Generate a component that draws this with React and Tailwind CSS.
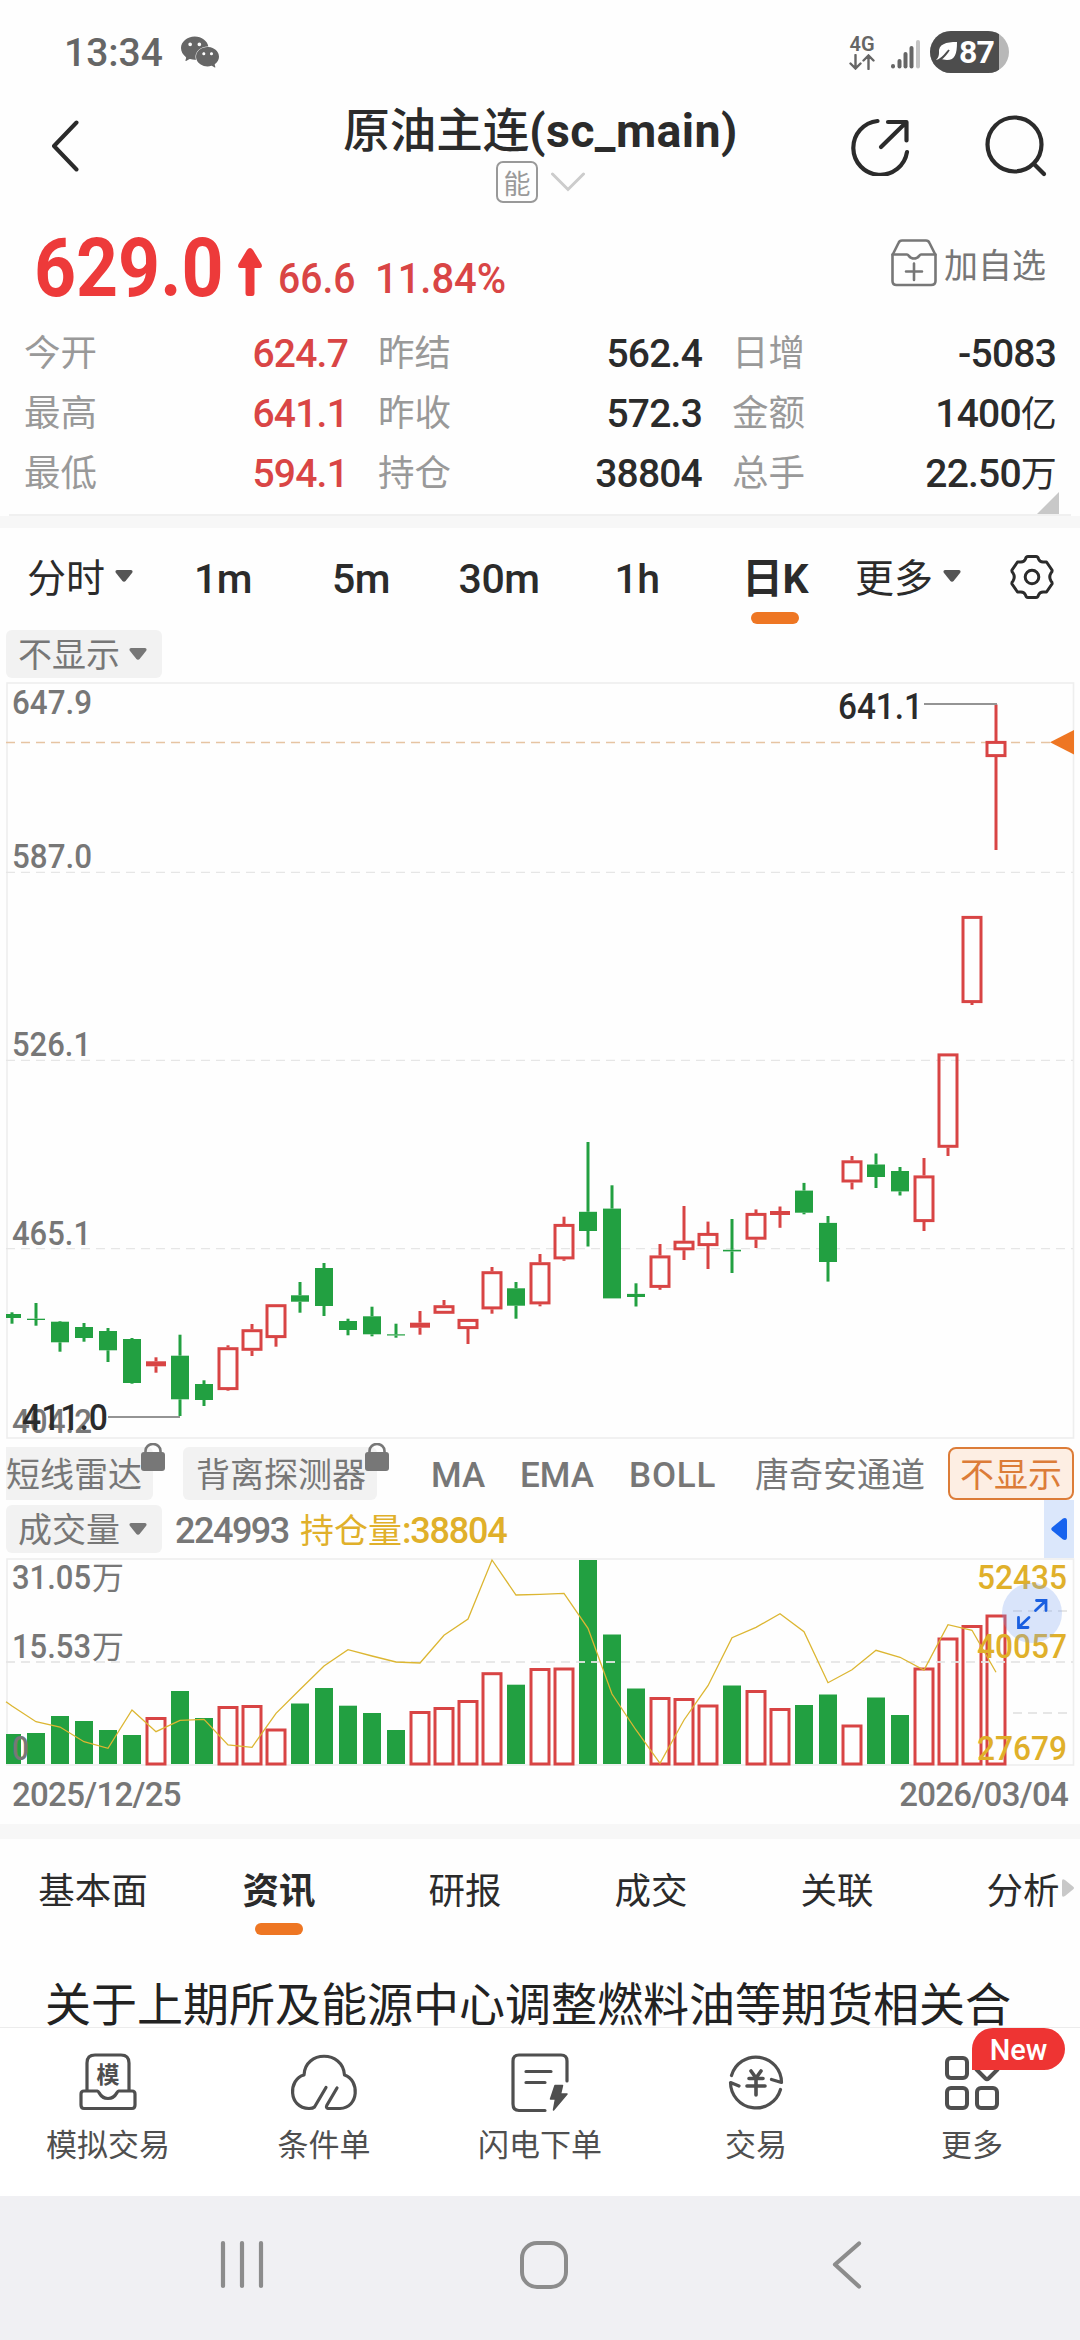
import { SiWechat } from "react-icons/si";

const quotes = [
  [
    { label: "今开", value: "624.7", up: true },
    { label: "昨结", value: "562.4" },
    { label: "日增", value: "-5083" },
  ],
  [
    { label: "最高", value: "641.1", up: true },
    { label: "昨收", value: "572.3" },
    { label: "金额", value: "1400亿" },
  ],
  [
    { label: "最低", value: "594.1", up: true },
    { label: "持仓", value: "38804" },
    { label: "总手", value: "22.50万" },
  ],
];

const periods = ["1m", "5m", "30m", "1h", "日K"];
const newsTabs = ["基本面", "资讯", "研报", "成交", "关联", "分析"];

// [up, bodyTop, bodyBottom, high, low, volumeTop, openInterest]
const candles = [
  [0, 1314, 1318, 1312.3, 1323.7, 1734, 1706],
  [0, 1318.7, 1320, 1303, 1325.7, 1733, 1721.7],
  [0, 1321.7, 1342.3, 1321, 1351.7, 1716, 1727],
  [0, 1327, 1338, 1323, 1341.7, 1721, 1741.7],
  [0, 1331, 1350.3, 1328, 1362, 1730, 1748.3],
  [0, 1339, 1383, 1338, 1383.7, 1735, 1710],
  [1, 1361.3, 1366.3, 1357.3, 1372.7, 1717.5, 1731.7],
  [0, 1355.7, 1399.3, 1334.7, 1416, 1691, 1720.3],
  [0, 1384, 1400, 1380.3, 1406, 1718, 1719.3],
  [1, 1347.3, 1390, 1345.3, 1390.7, 1706.5, 1745],
  [1, 1329.3, 1350.7, 1324, 1356, 1705.5, 1747.3],
  [1, 1304.3, 1338, 1304.3, 1346.7, 1729, 1713.3],
  [0, 1295.3, 1301.7, 1282, 1312.7, 1703.5, 1689.5],
  [0, 1268, 1306, 1263, 1316, 1688, 1666],
  [0, 1321, 1330, 1318.7, 1335.3, 1705.7, 1649.7],
  [0, 1316.3, 1334.3, 1306.7, 1336.3, 1713, 1656],
  [0, 1334.3, 1335.5, 1323.7, 1337.7, 1730, 1662],
  [1, 1322.7, 1327.7, 1311, 1334.7, 1711.5, 1663],
  [1, 1305.3, 1313.7, 1300, 1313.7, 1707.5, 1635.3],
  [1, 1319, 1329, 1319, 1344, 1700.5, 1619],
  [1, 1271.3, 1309.3, 1267, 1313.7, 1672.7, 1560],
  [0, 1288.3, 1305.7, 1282, 1318.7, 1684.7, 1595],
  [1, 1262.3, 1304.3, 1254, 1306.3, 1668.5, 1594.3],
  [1, 1224, 1259.3, 1216.7, 1260.8, 1668, 1593.3],
  [0, 1211.8, 1231, 1142, 1246.5, 1560, 1628.3],
  [0, 1208.6, 1298.4, 1185.3, 1298.4, 1634.5, 1694],
  [0, 1293.9, 1297, 1283.3, 1306.5, 1688.5, 1730],
  [1, 1255.5, 1287.8, 1244, 1289.8, 1697.5, 1763.3],
  [1, 1240.8, 1250.2, 1206, 1260, 1698.5, 1720],
  [1, 1233, 1246, 1221.6, 1269, 1705, 1685.7],
  [0, 1249.8, 1251.4, 1219, 1273, 1685.5, 1637.7],
  [1, 1213, 1239.6, 1209.4, 1248, 1690.5, 1627.3],
  [1, 1211, 1215, 1206.5, 1227.8, 1708.5, 1613.7],
  [0, 1190.6, 1212.7, 1182.9, 1214.3, 1705, 1631.7],
  [0, 1222.9, 1262, 1216, 1281.6, 1694.5, 1682.7],
  [1, 1160.4, 1182.4, 1156, 1189.4, 1725, 1669.7],
  [0, 1164.5, 1177, 1153.5, 1188, 1697.5, 1650.3],
  [0, 1171, 1191.4, 1167, 1195.5, 1715, 1657.3],
  [1, 1175.5, 1222, 1158, 1231, 1668, 1670],
  [1, 1053.5, 1147.7, 1053.5, 1156, 1638, 1624.7],
  [1, 916, 1003, 916, 1005, 1625.5, 1630.3],
  [1, 741, 757, 704.5, 850, 1615, 1672.3],
];

const candleX = (i) => 12 + i * 24;

const RED = "#d84444";
const GREEN = "#22a041";

const Caret = ({ className = "" }) => (
  <svg viewBox="0 0 18 12" className={`w-[18px] h-3 ${className}`}>
    <path
      d="M2 0H16Q18.500 0.500 17 3L11 10.500Q9 13 7 10.500L1 3Q-0.500 0.500 2 0Z"
      fill="currentColor"
    />
  </svg>
);

const Lock = () => (
  <svg
    viewBox="0 0 24 28"
    className="absolute -right-3 -top-1 w-6 h-7 text-[#777]"
  >
    <path
      d="M4.5 11V8a7.5 7 0 0 1 15 0v3"
      fill="none"
      stroke="currentColor"
      strokeWidth="2.6"
    />
    <rect y="9" width="24" height="19" rx="3" fill="currentColor" />
  </svg>
);

const StatusBar = () => (
  <div className="h-[104px] shrink-0 flex items-center justify-between pl-[64px] pr-[71px] text-[#666]">
    <div className="flex items-center">
      <span className="w-[98px] pt-0.5 text-[39px] font-medium leading-none whitespace-nowrap">
        13:34
      </span>
      <SiWechat className="ml-[19px] w-[38px] h-[38px]" />
    </div>
    <div className="flex items-center">
      <div className="w-[26px] flex flex-col items-center">
        <span className="text-[20px] leading-[19px] font-semibold">4G</span>
        <svg viewBox="0 0 26 16" className="w-[26px] h-4">
          <path
            d="M6.5 1V14M1.5 9.5L6.5 14.5L11.5 9.5M19.5 15V2M14.5 6.5L19.5 1.5L24.5 6.5"
            fill="none"
            stroke="currentColor"
            strokeWidth="2.4"
            strokeLinecap="round"
          />
        </svg>
      </div>
      <svg viewBox="0 0 30 30" className="ml-4 mt-1 w-[30px] h-[30px]">
        <g fill="currentColor">
          <rect x="0" y="25" width="4" height="4.5" rx="2" />
          <rect x="6.5" y="20" width="4" height="9.5" rx="2" />
          <rect x="12.5" y="13" width="4" height="16.5" rx="2" />
          <rect x="18.5" y="7" width="4" height="22.5" rx="2" />
          <rect x="25" y="1" width="4" height="28.5" rx="2" fill="#c4c4c4" />
        </g>
      </svg>
      <div className="ml-[9px] w-[79px] h-[42px] rounded-full overflow-hidden bg-[#b8b8b8]">
        <div className="w-[69px] h-full bg-[#4d4d4d] text-white flex items-center">
          <svg viewBox="0 0 24 22" className="ml-[5px] w-6 h-[22px]">
            <path
              d="M22 1C22 13 20 19 12 19C9 19 8 18 6 18C4 18 3 20 1 19C3 17 4 15 4 12C3 3 11 1 22 1Z"
              fill="currentColor"
            />
            <path
              d="M1 20C7 19 10 14 14 9"
              fill="none"
              stroke="#4d4d4d"
              strokeWidth="2"
            />
          </svg>
          <span className="text-[32px] leading-none font-bold tracking-[-0.8px]">
            87
          </span>
        </div>
      </div>
    </div>
  </div>
);

const Header = () => (
  <div className="h-[110px] shrink-0 flex justify-between items-start pl-[50px] pr-[33px] text-[#2b2b2b]">
    <div className="w-[181px] h-[84px] flex items-center">
      <svg viewBox="0 0 30 52" className="w-[30px] h-[52px]">
        <path
          d="M26.5 2.5L4 26L26.5 49.5"
          fill="none"
          stroke="currentColor"
          strokeWidth="4"
          strokeLinecap="round"
          strokeLinejoin="round"
        />
      </svg>
    </div>
    <div className="flex flex-col items-center">
      <h1 className="text-[46.5px] leading-[54px] h-[52px] font-medium whitespace-nowrap">
        原油主连
        <span className="font-bold tracking-[0.4px]">(sc_main)</span>
      </h1>
      <div className="mt-[5px] flex items-center gap-[13px]">
        <span className="w-[42px] h-[42px] border-2 border-[#999] rounded-[7px] text-[#999] text-[27px] leading-[44px] text-center">
          能
        </span>
        <svg viewBox="0 0 34 20" className="w-[34px] h-5">
          <path
            d="M1.5 2L17 17.5L32.5 2"
            fill="none"
            stroke="#ccc"
            strokeWidth="3"
            strokeLinecap="round"
          />
        </svg>
      </div>
    </div>
    <div className="h-[84px] flex items-center gap-[73px]">
      <svg
        viewBox="0 0 60 60"
        className="w-[60px] h-[60px]"
        fill="none"
        stroke="currentColor"
        strokeWidth="4.2"
        strokeLinecap="round"
        strokeLinejoin="round"
      >
        <path d="M27.5 5A27 27 0 1 0 57 36" />
        <path d="M38 6H56.5V24.500M55.500 7L31 31" />
      </svg>
      <svg
        viewBox="0 0 64 64"
        className="w-[64px] h-[64px]"
        fill="none"
        stroke="currentColor"
        strokeWidth="4.2"
        strokeLinecap="round"
      >
        <circle cx="31.500" cy="30.500" r="27" />
        <path d="M51 50L61 60" />
      </svg>
    </div>
  </div>
);

const PriceRow = () => (
  <div className="h-[109px] shrink-0 flex justify-between pl-[34px] pr-[34px]">
    <div className="flex items-end text-[#ed3a3a] h-[93px]">
      <span className="w-[192px] pb-[3px] text-[81px] leading-[70px] font-bold">
        <span className="inline-block origin-left scale-x-[0.905]">629.0</span>
      </span>
      <svg viewBox="0 0 24 48" className="ml-3 mb-[11px] w-6 h-12">
        <path
          d="M12 0Q13.500 0 15 2L23.500 16Q25 20 21 20H16.500V45Q16.500 48 14 48H10Q7.500 48 7.500 45V20H3Q-1 20 0.500 16L9 2Q10.500 0 12 0Z"
          fill="currentColor"
        />
      </svg>
      <span className="ml-4 w-[97px] text-[42px] leading-[56px] font-medium text-[#d94545]">
        <span className="inline-block origin-left scale-x-[0.93]">66.6</span>
      </span>
      <span className="text-[42px] leading-[56px] font-medium text-[#d94545]">
        <span className="inline-block origin-left scale-x-[0.95]">11.84%</span>
      </span>
    </div>
    <div className="mt-[26px] h-[46px] flex items-center text-[#777]">
      <svg
        viewBox="0 0 46 48"
        className="w-[46px] h-12"
        fill="none"
        stroke="currentColor"
        strokeWidth="2.6"
        strokeLinecap="round"
        strokeLinejoin="round"
      >
        <path d="M1.500 16V42Q1.500 46 5.500 46H40Q44.500 46 44.500 42V16L38.500 4Q37.500 1.500 35 1.500H11Q8.500 1.500 7.500 4Z" />
        <path d="M1.500 15.500H16C18 15.500 18 19.500 23 19.500S28 15.500 30 15.500H44.500M23 24.500V41M15 32.500H31" />
      </svg>
      <span className="ml-[7px] pt-1.5 text-[34px] leading-[46px]">加自选</span>
    </div>
  </div>
);

const QuoteTable = () => (
  <div className="relative h-[193px] shrink-0 px-6">
    {quotes.map((row, i) => (
      <div key={i} className="h-[60px] pt-[3px] flex gap-[30px]">
        {row.map((item) => (
          <div
            key={item.label}
            className="flex-1 flex items-center justify-between"
          >
            <span className="text-[36.5px] text-[#999]">{item.label}</span>
            <span
              className={`text-[39px] font-medium tracking-[-0.8px] ${
                item.up ? "text-[#d94545]" : "text-[#2b2b2b]"
              }`}
            >
              {item.value.replace(/[亿万]/, "")}
              <span className="text-[36px] font-normal">
                {item.value.match(/[亿万]/)}
              </span>
            </span>
          </div>
        ))}
      </div>
    ))}
    <svg
      viewBox="0 0 22 22"
      className="absolute right-[21px] bottom-0.5 w-[22px] h-[22px]"
    >
      <path d="M22 0V22H0Z" fill="#c8c8c8" />
    </svg>
    <div className="absolute inset-x-[9px] bottom-0 h-0.5 bg-[#f0f0f0]" />
  </div>
);

const PeriodTabs = () => (
  <div className="h-[102px] shrink-0 flex text-[#2b2b2b] leading-[102px]">
    <div className="w-[154px] pl-[27px] flex items-center gap-2.5 text-[39px]">
      <span>分时</span>
      <Caret className="text-[#555] -mt-1.5" />
    </div>
    {periods.map((item) => (
      <div
        key={item}
        className={`relative w-[138px] text-center text-[41px] tracking-[-0.5px] ${
          item === "日K" ? "font-bold" : "font-medium"
        }`}
      >
        {item}
        {item === "日K" && (
          <span className="absolute left-[45px] bottom-1.5 w-12 h-3 rounded-full bg-[#ee7623]" />
        )}
      </div>
    ))}
    <div className="w-[130px] pl-[11px] flex items-center gap-2.5 text-[39px]">
      <span>更多</span>
      <Caret className="text-[#555] -mt-1.5" />
    </div>
    <div className="flex-1 flex items-center pl-9 pb-[5px]">
      <svg
        viewBox="0 0 44 44"
        className="w-11 h-11"
        fill="none"
        stroke="currentColor"
        strokeWidth="3"
        strokeLinejoin="round"
      >
        <path d="M18 1.500H26Q28 1.500 28.500 4Q30 7.500 34 7H36.500L42 15Q42.500 16.500 41 18Q38.500 22 41 26Q42.500 27.500 42 29L36.500 37H34Q30 36.500 28.500 40Q28 42.500 26 42.500H18Q16 42.500 15.500 40Q14 36.500 10 37H7.500L2 29Q1.500 27.500 3 26Q5.500 22 3 18Q1.500 16.500 2 15L7.500 7H10Q14 7.500 15.500 4Q16 1.500 18 1.500Z" />
        <circle cx="22" cy="22" r="6.800" />
      </svg>
    </div>
  </div>
);

const DropdownChip = ({ text }) => (
  <div className="w-[156px] h-12 rounded-md bg-[#f2f2f2] text-[#777] flex items-center pl-3 gap-[9px] text-[34px] leading-[48px] whitespace-nowrap">
    <span className="pt-0.5">{text}</span>
    <Caret />
  </div>
);

const GridText = ({ x, y, width, children, size = 33, fill = "#777" }) => (
  <text
    x={x}
    y={y}
    fontSize={size}
    fill={fill}
    textLength={width}
    lengthAdjust="spacingAndGlyphs"
    fontWeight="500"
  >
    {children}
  </text>
);

const CandleChart = () => (
  <svg viewBox="0 682 1080 758" className="w-[1080px] h-[758px] shrink-0">
    <rect
      x="7"
      y="683"
      width="1066.500"
      height="755"
      fill="none"
      stroke="#eee"
      strokeWidth="1.600"
    />
    {[872.3, 1060.3, 1248.6].map((y) => (
      <line
        key={y}
        x1="6"
        x2="1073"
        y1={y}
        y2={y}
        stroke="#e6e6e6"
        strokeWidth="1.300"
        strokeDasharray="9 6"
      />
    ))}
    <line
      x1="6"
      x2="1052"
      y1="742.500"
      y2="742.500"
      stroke="#e6c4a2"
      strokeWidth="1.300"
      strokeDasharray="9 6"
    />
    <path d="M1050 742.300L1074 730V754.500Z" fill="#ee7623" />

    <GridText x="12" y="714" width="80">647.9</GridText>
    <GridText x="12" y="868" width="80">587.0</GridText>
    <GridText x="12" y="1056" width="79">526.1</GridText>
    <GridText x="12" y="1245" width="79">465.1</GridText>
    <GridText x="12" y="1433" width="80">404.2</GridText>

    {candles.map(([up, top, bottom, high, low], i) => {
      const x = candleX(i);
      const color = up ? RED : GREEN;
      const hollow = up && bottom - top > 6;
      return (
        <g key={i} stroke={color} strokeWidth="3">
          {high < top && <line x1={x} x2={x} y1={high} y2={top} />}
          {low > bottom && <line x1={x} x2={x} y1={bottom} y2={low} />}
          {hollow ? (
            <rect
              x={x - 9}
              y={top + 1.4}
              width="18"
              height={bottom - top - 2.8}
              fill="none"
              strokeWidth="3"
            />
          ) : (
            <rect
              x={Math.max(x - (up ? 10 : 9), 6)}
              y={top}
              width={i === 0 ? 15 : up ? 20 : 18}
              height={bottom - top}
              fill={color}
              stroke="none"
            />
          )}
        </g>
      );
    })}

    <path d="M108 1417H180M924 704H997" stroke="#949494" strokeWidth="2" />
    <GridText x="22" y="1430" width="86" size={36} fill="#2b2b2b">
      411.0
    </GridText>
    <GridText x="838" y="719" width="85" size={36} fill="#2b2b2b">
      641.1
    </GridText>
  </svg>
);

const IndicatorBar = () => (
  <div className="h-[60px] shrink-0 flex items-end pl-1.5 pr-1.5 text-[#777] text-[34px] leading-[57px] whitespace-nowrap">
    <div className="relative w-[147px] h-[53px] bg-[#f2f2f2] rounded-r-md">
      短线雷达
      <Lock />
    </div>
    <div className="relative ml-[30px] w-[194px] h-[53px] bg-[#f2f2f2] rounded-md pl-[13px]">
      背离探测器
      <Lock />
    </div>
    <span className="ml-[54px] w-[89px] h-[53px] text-[35px] font-medium">MA</span>
    <span className="w-[109px] h-[53px] text-[35px] font-medium">EMA</span>
    <span className="w-[126px] h-[53px] text-[35px] font-medium tracking-[0.8px]">
      BOLL
    </span>
    <span className="h-[53px]">唐奇安通道</span>
    <div className="ml-auto w-[126px] h-[53px] border-2 border-[#dc7c38] rounded-lg bg-[#fdeee3] text-[#dc7c38] text-center leading-[53px]">
      不显示
    </div>
  </div>
);

const VolumeHeader = () => (
  <div className="h-[58px] shrink-0 flex items-center px-1.5">
    <DropdownChip text="成交量" />
    <span className="ml-[13px] pt-1 w-[125px] text-[36px] font-medium text-[#777] tracking-[-1.500px]">
      224993
    </span>
    <span className="pt-1 text-[34px] text-[#e0b02a]">
      持仓量
      <span className="text-[36px] font-medium tracking-[-1.200px]">
        :38804
      </span>
    </span>
    <div className="ml-auto w-[30px] h-[58px] bg-[#dbe7fb] flex items-center justify-center">
      <svg viewBox="0 0 16 22" className="w-4 h-[22px]">
        <path
          d="M12 0.500Q16 -1 16 3V19Q16 23 12 21.500L1 12.500Q-0.500 11 1 9.500Z"
          fill="#1763ee"
        />
      </svg>
    </div>
  </div>
);

const VolumeChart = () => (
  <div className="h-[266px] shrink-0">
    <svg viewBox="0 1558 1080 210" className="w-[1080px] h-[210px]">
      <rect
        x="7"
        y="1559"
        width="1066.500"
        height="206"
        fill="none"
        stroke="#eee"
        strokeWidth="1.600"
      />
      <path
        d="M1013 1611H1068M1013 1713H1068"
        stroke="#e6e6e6"
        strokeWidth="2"
        strokeDasharray="9 6"
      />
      {candles.map(([up, , , , , top], i) =>
        up ? (
          <rect
            key={i}
            x={candleX(i) - 9}
            y={top + 1}
            width="18"
            height={1764 - top - 1}
            fill="none"
            stroke={RED}
            strokeWidth="3"
          />
        ) : (
          <rect
            key={i}
            x={Math.max(candleX(i) - 9, 6)}
            y={top}
            width={i === 0 ? 15 : 18}
            height={1764 - top}
            fill={GREEN}
          />
        )
      )}
      <path
        d="M6 1662H1073"
        stroke="#e6e6e6"
        strokeOpacity="0.900"
        strokeWidth="2"
        strokeDasharray="9 6"
      />
      <polyline
        points={`6,1701.7 ${candles
          .map((item, i) => `${candleX(i)},${item[6]}`)
          .join(" ")}`}
        fill="none"
        stroke="#dcb632"
        strokeWidth="1.300"
      />
      <GridText x="12" y="1589" width="79">31.05</GridText>
      <GridText x="12" y="1658" width="79">15.53</GridText>
      <g fontSize="32" fill="#777">
        <text x="92" y="1589">万</text>
        <text x="92" y="1658">万</text>
      </g>
      <GridText x="12" y="1760" width="17">0</GridText>
      <GridText x="977" y="1589" width="90" fill="#e0b02a">52435</GridText>
      <GridText x="977" y="1658" width="90" fill="#e0b02a">40057</GridText>
      <GridText x="977" y="1760" width="90" fill="#e0b02a">27679</GridText>

      {/* full screen button */}
      <circle cx="1032" cy="1613" r="30" fill="#7aa2ef" fillOpacity="0.280" />
      <path
        d="M1035.500 1610.500L1046 1600.500M1036.500 1600.500H1046V1610.500M1029 1617.500L1018.500 1627.500M1018.500 1617.500V1627.500H1028"
        fill="none"
        stroke="#1a5fe0"
        strokeWidth="2.800"
        strokeLinecap="round"
      />
    </svg>
    <div className="h-[56px] px-3 flex justify-between text-[33px] leading-[54px] font-medium text-[#777] tracking-[-0.700px]">
      <span>2025/12/25</span>
      <span>2026/03/04</span>
    </div>
  </div>
);

const NewsTabs = () => (
  <div className="relative h-[111px] shrink-0 flex overflow-hidden text-[36.5px] leading-[105px] text-[#2b2b2b]">
    {newsTabs.map((item) => (
      <div
        key={item}
        className={`relative w-[186px] shrink-0 text-center ${
          item === "资讯" ? "font-bold" : ""
        }`}
      >
        {item}
        {item === "资讯" && (
          <span className="absolute left-[69px] bottom-[15px] w-12 h-3 rounded-full bg-[#ee7623]" />
        )}
      </div>
    ))}
    <svg
      viewBox="0 0 12 18"
      className="absolute right-1.5 top-10 w-3 h-[18px]"
    >
      <path d="M0 2Q0 -1 3 1L11 7.500Q13 9 11 10.500L3 17Q0 19 0 16Z" fill="#c8c8c8" />
    </svg>
  </div>
);

const actions = [
  {
    label: "模拟交易",
    icon: (
      <>
        <path d="M8 37V10Q8 2 16 2H42Q50 2 50 10V37" />
        <path d="M5 38H18.500C20.500 38 20.500 45.500 29 45.500S37.500 38 39.500 38H53Q56 38 56 41V52Q56 55.500 53 55.500H5Q2 55.500 2 52V41Q2 38 5 38Z" />
        <text
          x="29"
          y="30"
          fontSize="23"
          fontWeight="700"
          textAnchor="middle"
          fill="currentColor"
          stroke="none"
        >
          模
        </text>
      </>
    ),
  },
  {
    label: "条件单",
    icon: (
      <path d="M31 34.500L19.500 54Q18 55.500 14 55.500C-7 55 -7 26 9 22C10 -3 48 -3 49.500 22C65 27 64 55 45 55.500H33Q30.500 55 32 52L42 35" />
    ),
  },
  {
    label: "闪电下单",
    icon: (
      <>
        <path d="M56 28V8Q56 2 50 2H8Q2 2 2 8V51Q2 57.500 8 57.500H34M15 18.500H40M15 29.500H34" />
        <path
          d="M44 32.500H51.500L49.500 41H56L42.500 57L44.500 46H39.500Z"
          fill="currentColor"
          strokeWidth="1.500"
        />
      </>
    ),
  },
  {
    label: "交易",
    icon: (
      <>
        <path d="M4.500 22.500A25.500 25.500 0 0 1 54.500 29.500L44.500 26.500M53.500 36.500A25.500 25.500 0 0 1 3.500 29.500L12 33" />
        <path
          d="M24 18L29 25L34 18M22 25.500H36M20 33H38M29 25V42"
          strokeWidth="3.600"
        />
      </>
    ),
  },
  {
    label: "更多",
    icon: (
      <>
        <rect x="4" y="5" width="20" height="20" rx="4" strokeWidth="4" />
        <rect x="4" y="35" width="20" height="20" rx="4" strokeWidth="4" />
        <rect x="34" y="35" width="20" height="20" rx="4" strokeWidth="4" />
        <path
          d="M44 3L54.500 13.500Q56 15 54.500 16.500L45.500 25.500Q44 27 42.500 25.500L33.500 16.500Q32 15 33.500 13.500Z"
          strokeWidth="4"
        />
      </>
    ),
  },
];

const ActionBar = () => (
  <div className="h-[169px] shrink-0 border-t border-[#ececec] bg-white flex text-[#4f4f4f]">
    {actions.map((item) => (
      <div
        key={item.label}
        className="relative w-[216px] flex flex-col items-center pt-[25px]"
      >
        <svg
          viewBox="0 0 58 58"
          className="w-[58px] h-[58px] overflow-visible"
          fill="none"
          stroke="currentColor"
          strokeWidth="3.200"
          strokeLinecap="round"
          strokeLinejoin="round"
        >
          {item.icon}
        </svg>
        <span className="mt-[15px] text-[31px] leading-[40px]">{item.label}</span>
        {item.label === "更多" && (
          <span className="absolute left-[108px] top-0 w-[93px] h-[42px] rounded-full rounded-bl-none bg-[#ee3433] text-white text-[29px] leading-[44px] font-medium text-center">
            New
          </span>
        )}
      </div>
    ))}
  </div>
);

const SystemNav = () => (
  <div className="h-36 shrink-0 bg-[#f0f0f3] flex items-center pl-[219px]">
    <svg viewBox="0 0 46 52" className="w-[46px] h-[52px] -mt-1.5">
      <path
        d="M4 4V47M23 4V47M42 4V47"
        stroke="#8c8c8c"
        strokeWidth="4.200"
        strokeLinecap="round"
      />
    </svg>
    <div className="ml-[255px] -mt-1.5 w-12 h-12 border-[4.5px] border-[#8c8c8c] rounded-[17px]" />
    <svg viewBox="0 0 34 52" className="ml-[262px] w-[34px] h-[52px] -mt-1.5">
      <path
        d="M29 4.500L5 25.500L29 47.500"
        fill="none"
        stroke="#8c8c8c"
        strokeWidth="4.200"
        strokeLinecap="round"
        strokeLinejoin="round"
      />
    </svg>
  </div>
);

const App = () => {
  return (
    <div className="w-[1080px] h-[2340px] overflow-hidden bg-[#fefefe] flex flex-col font-[Roboto,'Noto_Sans_CJK_SC',sans-serif]">
      <StatusBar />
      <Header />
      <PriceRow />
      <QuoteTable />
      <div className="h-3 shrink-0 bg-[#f7f7f7]" />
      <PeriodTabs />
      <div className="h-[52px] shrink-0 pl-1.5">
        <DropdownChip text="不显示" />
      </div>
      <CandleChart />
      <IndicatorBar />
      <VolumeHeader />
      <VolumeChart />
      <div className="h-[15px] shrink-0 bg-[#f7f7f7]" />
      <NewsTabs />
      <p className="h-[77px] shrink-0 pl-[45px] pt-6 text-[46px] leading-[62px] text-[#222] whitespace-nowrap">
        关于上期所及能源中心调整燃料油等期货相关合
      </p>
      <ActionBar />
      <SystemNav />
    </div>
  );
};

export default App;
